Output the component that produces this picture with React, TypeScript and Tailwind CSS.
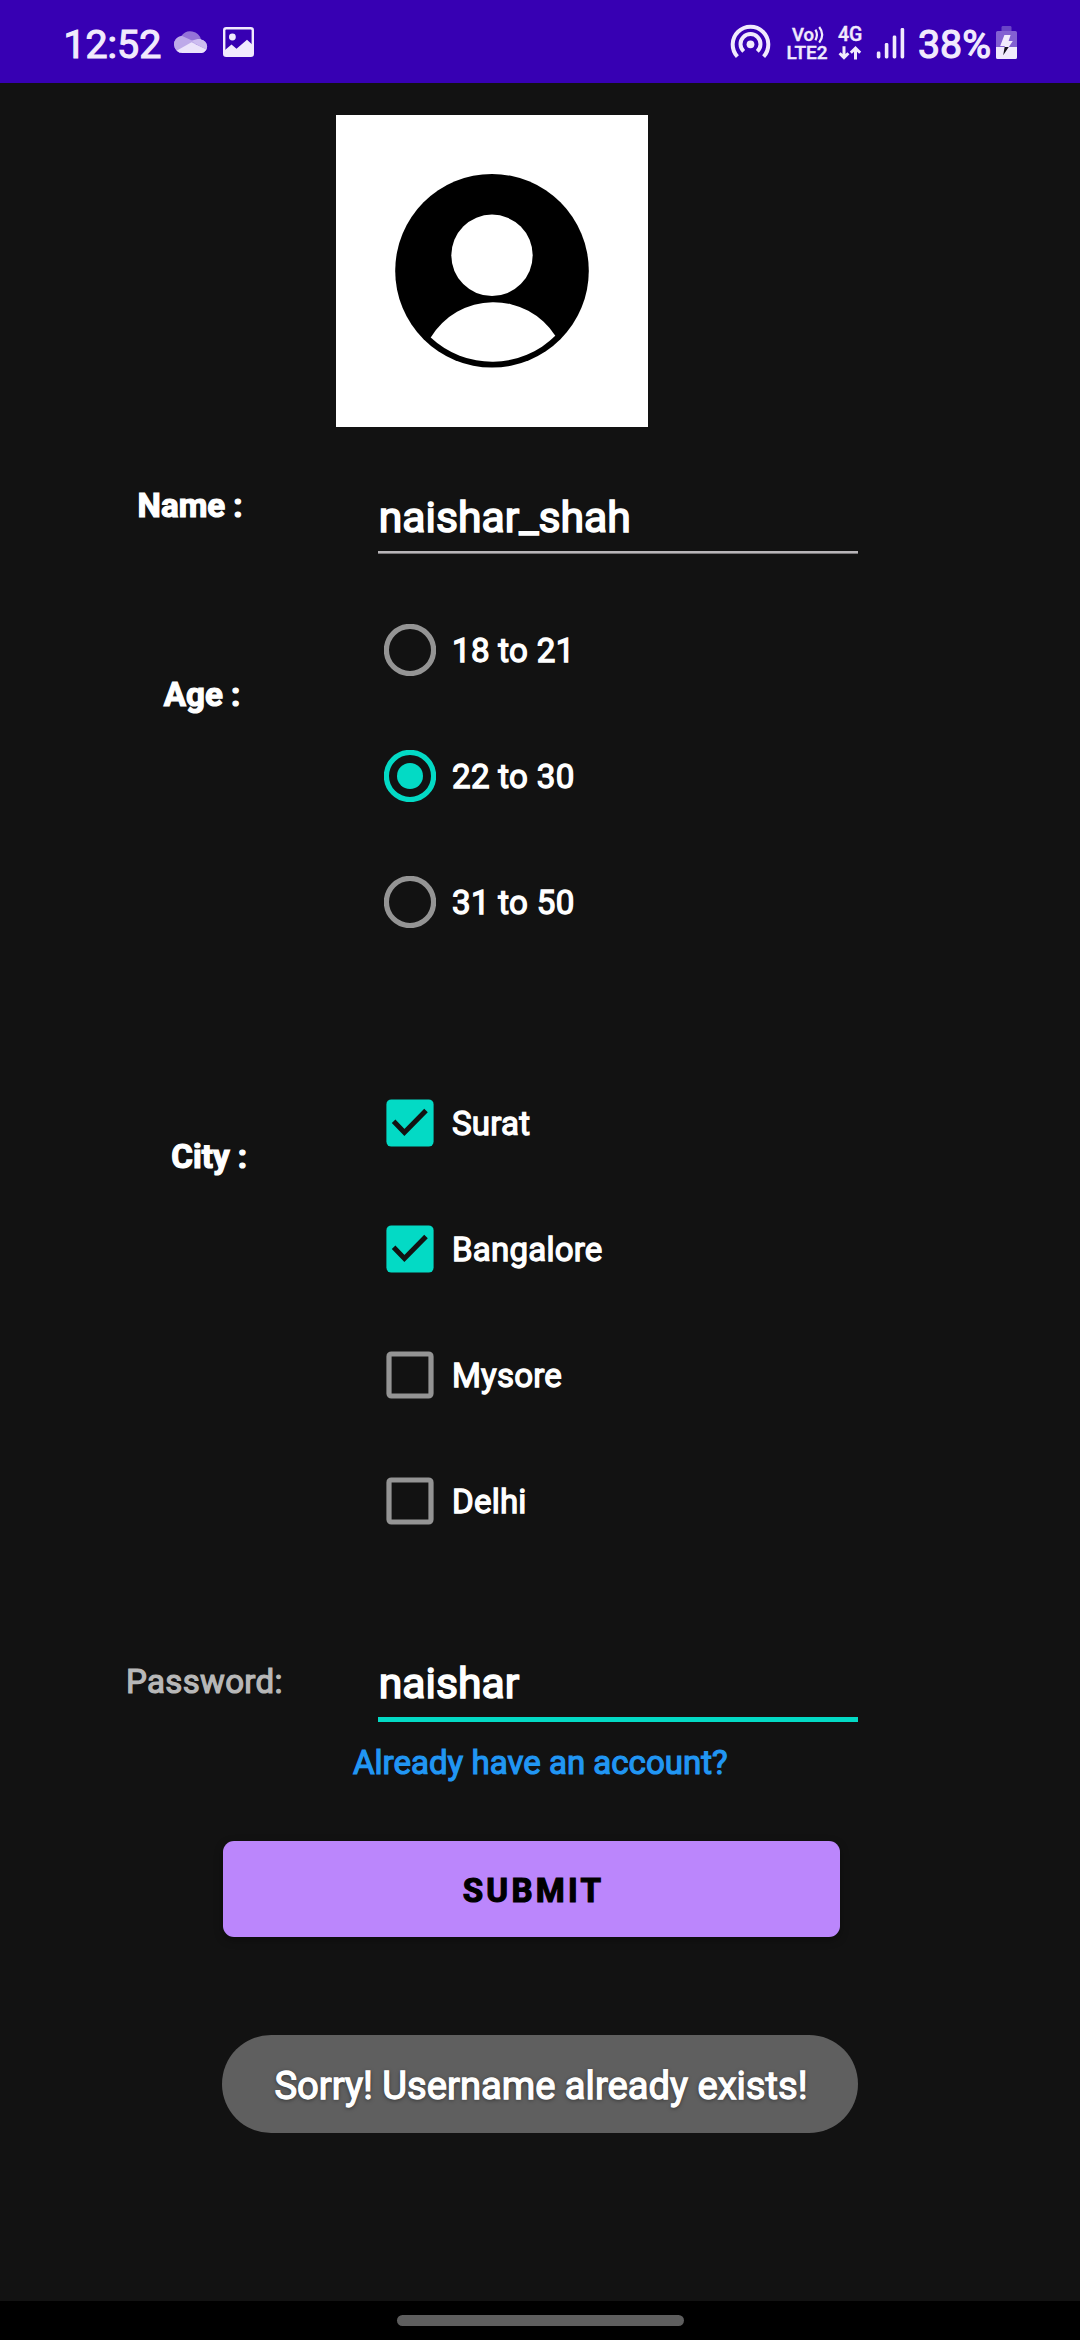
import type { ReactNode } from "react";

const INK = "#f1eafd";

function CloudIcon() {
  return (
    <svg className="h-[83px] w-9" viewBox="174 0 36 83" fill="none">
      <defs>
        <clipPath id="cloud">
          <path d="M182.5 53a8.6 8.6 0 0 1-1.2-17.1A11 11 0 0 1 201 39.6a6.8 6.8 0 0 1 .8 13.4z" />
        </clipPath>
      </defs>
      <g clipPath="url(#cloud)">
        <rect x="174" y="28" width="36" height="28" fill="#9573d8" />
        <path d="M174 30l7 5.5 10.5 4.8 5 3.2L176 55h-4z" fill="#bda9e9" />
        <path d="M191.5 40.8l6-1.8h12v12l-12-6z" fill="#cdbdf0" />
        <path d="M177 50.5l14.5-8.2 17 8.2v5h-31z" fill="#ebe3fb" />
      </g>
    </svg>
  );
}

function PictureIcon() {
  return (
    <svg className="h-[83px] w-8" viewBox="223 0 32 83">
      <rect x="224.2" y="28.2" width="28.6" height="27.6" rx="2" fill="none" stroke={INK} strokeWidth="2.4" />
      <circle cx="232.4" cy="37" r="3.4" fill={INK} />
      <path d="M225 50l6.5-5.5 5 4.2 10.5-9 6 5.5v10.5h-28z" fill={INK} />
    </svg>
  );
}

function HotspotIcon() {
  return (
    <svg className="h-[83px] w-[41px]" viewBox="730 0 41 83" fill="none" stroke={INK}>
      <path d="M737.4 56.6a17.8 17.8 0 1 1 26.2 0" strokeWidth="4" />
      <path d="M743.7 51.4a10 10 0 1 1 13.6 0" strokeWidth="4" />
      <circle cx="750.5" cy="44.3" r="3.9" fill={INK} stroke="none" />
    </svg>
  );
}

function WavesIcon() {
  return (
    <svg className="-ml-px h-[18px] w-[12px]" viewBox="0 0 12 18" fill="none" stroke={INK} strokeWidth="2.2">
      <path d="M2.4 3.6q3 5.2 0 10.6" />
      <path d="M6.2 1q6 7.6 0 15.6" />
    </svg>
  );
}

function DataArrows() {
  return (
    <svg className="h-[14px] w-6" viewBox="0 0 24 14" fill="none" stroke={INK} strokeWidth="3">
      <path d="M6 .2v11.3M1.6 7.2 6 11.6l4.4-4.4" />
      <path d="M17.5 13.6V2.4M12.8 6.8l4.7-4.6 4.7 4.6" />
    </svg>
  );
}

function SignalIcon() {
  return (
    <svg className="h-[83px] w-[29px]" viewBox="876 0 29 83" fill={INK}>
      <rect x="876.8" y="51.5" width="3.6" height="7" rx="1.4" />
      <rect x="884.8" y="43" width="3.6" height="15.5" rx="1.4" />
      <rect x="892.7" y="35.5" width="3.6" height="23" rx="1.4" />
      <rect x="900.6" y="28" width="3.6" height="30.5" rx="1.4" />
    </svg>
  );
}

function BatteryIcon() {
  return (
    <svg className="h-[83px] w-[23px]" viewBox="995 0 23 83">
      <defs>
        <clipPath id="charged">
          <rect x="995" y="47" width="23" height="13" />
        </clipPath>
      </defs>
      <path d="M1001.5 31v-3.6a1.4 1.4 0 0 1 1.4-1.4h7.2a1.4 1.4 0 0 1 1.4 1.4V31z" fill="#6a44c6" />
      <path d="M996 47V32.6a1.6 1.6 0 0 1 1.6-1.6h17.8a1.6 1.6 0 0 1 1.6 1.6V47z" fill="#8360d2" />
      <path d="M996 47h21v10.4a1.6 1.6 0 0 1-1.6 1.6h-17.8a1.6 1.6 0 0 1-1.6-1.6z" fill={INK} />
      <path d="M1004.4 35h6.2l-2 6h4.2l-9.6 14.2 1.6-9.2h-4.6z" fill={INK} />
      <path d="M1004.4 35h6.2l-2 6h4.2l-9.6 14.2 1.6-9.2h-4.6z" fill="#15101f" clipPath="url(#charged)" />
    </svg>
  );
}

function StatusBar() {
  return (
    <header className="flex h-[83px] shrink-0 bg-[#3700b3] pr-[62px] pl-[63.4px] text-[#f1eafd]">
      <span className="mt-[21.5px] w-[110.6px] text-[39.3px] leading-[46px] [-webkit-text-stroke:1.2px]">12:52</span>
      <CloudIcon />
      <span className="ml-[13px] flex">
        <PictureIcon />
      </span>
      <div className="ml-auto flex">
        <HotspotIcon />
        <div className="ml-[15px] w-[43px] pt-[26px] font-medium [-webkit-text-stroke:0.4px]">
          <div className="flex h-[17.5px] items-center pl-[6px] text-[18.5px] leading-[18px]">
            Vo
            <WavesIcon />
          </div>
          <div className="pl-[0.5px] text-[19px] leading-[17px]">LTE2</div>
        </div>
        <div className="ml-[9px] flex w-[26px] flex-col pt-[25px] font-medium [-webkit-text-stroke:0.4px]">
          <span className="text-[19.5px] leading-[19px]">4G</span>
          <span className="mt-[2px]">
            <DataArrows />
          </span>
        </div>
        <span className="ml-3 flex">
          <SignalIcon />
        </span>
        <span className="mt-[21.5px] ml-[13px] w-[77px] text-[39.3px] leading-[46px] [-webkit-text-stroke:1.2px]">38%</span>
        <BatteryIcon />
      </div>
    </header>
  );
}

function Avatar() {
  return (
    <div className="mt-8 ml-[336px] size-[312px] shrink-0 bg-white">
      <svg className="size-full" viewBox="0 0 312 312">
        <circle cx="156" cy="155.8" r="96.8" fill="#000" />
        <circle cx="156" cy="140.3" r="40.7" fill="#fff" />
        <path d="M94.7 222.5A73.5 73.5 0 0 1 219.3 220.8A90 90 0 0 1 94.7 222.5z" fill="#fff" />
      </svg>
    </div>
  );
}

function Row({ className = "", children }: { className?: string; children: ReactNode }) {
  return <section className={"grid shrink-0 grid-cols-[378px_480px] items-start " + className}>{children}</section>;
}

function Label({ className, children }: { className: string; children: ReactNode }) {
  return <div className={"text-[33.1px] leading-10 [-webkit-text-stroke:1.2px] " + className}>{children}</div>;
}

function Radio({ checked, children }: { checked?: boolean; children: ReactNode }) {
  const color = checked ? "#03dac5" : "#949494";
  return (
    <div className="flex h-[126px] items-center pl-[6px]">
      <svg className="size-[52px]" viewBox="0 0 52 52">
        <circle cx="26" cy="26" r="23.6" fill="none" stroke={color} strokeWidth="5.2" />
        {checked && <circle cx="26" cy="26" r="13" fill={color} />}
      </svg>
      <span className="mt-[2px] ml-4 text-[33.1px] leading-10 tracking-[0.3px] [-webkit-text-stroke:1.3px]">{children}</span>
    </div>
  );
}

function Check({ checked, children }: { checked?: boolean; children: ReactNode }) {
  return (
    <div className="flex h-[126px] items-center pl-2">
      <svg className="size-12" viewBox="0 0 48 48">
        {checked ? (
          <>
            <rect x="0.4" y="0.4" width="47.2" height="47.2" rx="5" fill="#03dac5" />
            <path d="M7.6 22.2 18.4 33.4 40 11.6" fill="none" stroke="#121212" strokeWidth="5" />
          </>
        ) : (
          <rect x="3" y="3" width="42" height="42" rx="2.4" fill="none" stroke="#949494" strokeWidth="5.2" />
        )}
      </svg>
      <span className="mt-[2px] ml-[18px] text-[33.1px] leading-10 tracking-[0.2px] [-webkit-text-stroke:1.3px]">{children}</span>
    </div>
  );
}

export default function App() {
  return (
    <div className="flex h-[2340px] w-[1080px] flex-col overflow-hidden bg-[#121212] font-[Roboto,sans-serif] whitespace-nowrap text-white">
      <StatusBar />
      <main className="flex flex-1 flex-col">
        <Avatar />
        <Row>
          <Label className="mt-[59px] pl-[137.6px] font-bold">Name :</Label>
          <div className="mt-[65px]">
            <div className="pl-[0.8px] text-[42.7px] leading-[50px] [-webkit-text-stroke:1.6px]">naishar_shah</div>
            <div className="mt-[9px] h-[3px] border-t-2 border-b border-t-[#b8b5b8] border-b-[#777577]" />
          </div>
        </Row>
        <Row className="mt-[33px]">
          <Label className="mt-[88px] pl-[163.8px] font-bold">Age :</Label>
          <div>
            <Radio>18 to 21</Radio>
            <Radio checked>22 to 30</Radio>
            <Radio>31 to 50</Radio>
          </div>
        </Row>
        <Row className="mt-[95px]">
          <Label className="mt-[77px] pl-[171.3px] font-bold">City :</Label>
          <div>
            <Check checked>Surat</Check>
            <Check checked>Bangalore</Check>
            <Check>Mysore</Check>
            <Check>Delhi</Check>
          </div>
        </Row>
        <Row>
          <Label className="mt-[98px] pl-[126px] tracking-[0.3px] text-[#b8b8b8]">Password:</Label>
          <div className="mt-[94px]">
            <div className="pl-[0.8px] text-[42.7px] leading-[50px] [-webkit-text-stroke:1.6px]">naishar</div>
            <div className="mt-[9px] h-[5px] bg-[#03dac5]" />
          </div>
        </Row>
        <a className="mt-[21px] ml-[353px] text-[33.05px] leading-10 text-[#2196f3] [-webkit-text-stroke:1.2px]">Already have an account?</a>
        <button className="mt-[58px] ml-[223px] h-24 w-[617px] rounded-[11px] bg-[#bb86fc] pt-[3px] pl-1 text-[33.1px] leading-10 font-bold tracking-[3.3px] text-black shadow-[0_3px_8px_rgba(0,0,0,0.35)] [-webkit-text-stroke:1.2px]">
          SUBMIT
        </button>
        <div className="mt-[98px] ml-[222px] flex h-[98px] w-[636px] items-center justify-center rounded-full bg-[#5f5f5f] pt-[3px] pl-[2px] text-[38.15px] leading-[44px] [-webkit-text-stroke:1.3px] [text-shadow:0_1px_4px_rgba(0,0,0,0.6)]">
          Sorry! Username already exists!
        </div>
      </main>
      <footer className="flex h-[39px] shrink-0 justify-center bg-black pt-[14px]">
        <div className="h-[11px] w-[287px] rounded-full bg-[#5e5e5e]" />
      </footer>
    </div>
  );
}
